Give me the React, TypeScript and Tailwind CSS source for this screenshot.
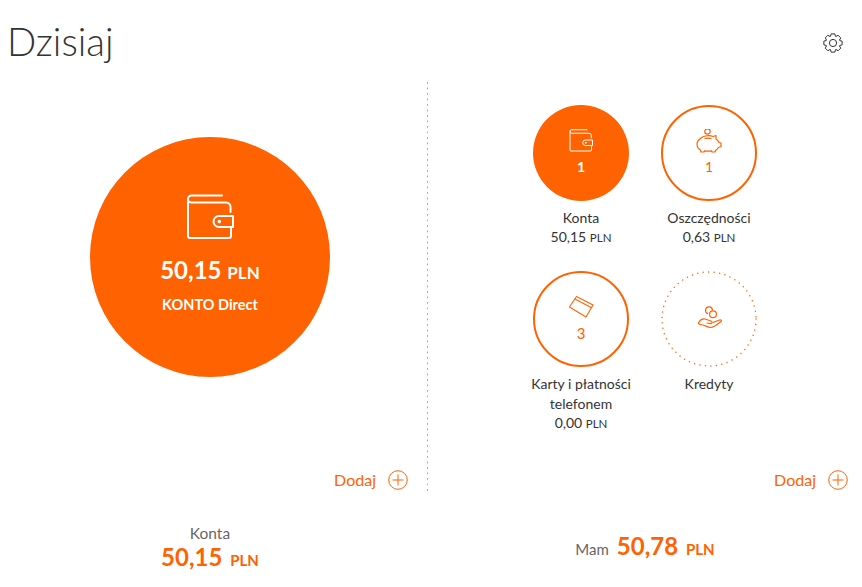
import React from 'react';

const font = "font-['Lato','Noto_Sans',sans-serif]";

// 8 tooth gear outline, looks closer than the lucide one
const gearPath = () => {
  const cx = 10;
  const cy = 10;
  const parts: string[] = [];
  for (let i = 0; i < 8; i++) {
    const a = (i * Math.PI) / 4 - Math.PI / 2;
    const pts: [number, number][] = [
      [7.1, a - 0.36],
      [9.3, a - 0.2],
      [9.3, a + 0.2],
      [7.1, a + 0.36],
    ];
    pts.forEach(([r, t], j) => {
      const x = (cx + r * Math.cos(t)).toFixed(2);
      const y = (cy + r * Math.sin(t)).toFixed(2);
      parts.push(`${i === 0 && j === 0 ? 'M' : 'L'}${x} ${y}`);
    });
  }
  return parts.join(' ') + ' Z';
};

const Wallet = ({ className }: { className?: string }) => (
  <svg viewBox="0 0 48 46" fill="none" stroke="currentColor" strokeWidth="2" strokeLinecap="round" strokeLinejoin="round" className={className}>
    <path d="M36 1.500H5.500A3.500 3.500 0 0 0 2 5v37a2 2 0 0 0 2 2h39a2 2 0 0 0 2-2v-9" />
    <path d="M2 5a3.500 3.500 0 0 0 3.500 3.500H40a4.500 4.500 0 0 1 4.500 4.500v5" />
    <path d="M47 33V22H33a5.500 5.500 0 0 0 0 11h14" />
    <circle cx="33.300" cy="27.600" r="0.800" fill="currentColor" />
  </svg>
);

const Piggy = ({ className }: { className?: string }) => (
  <svg viewBox="0 0 26 24" fill="none" stroke="currentColor" strokeWidth="1.200" strokeLinecap="round" strokeLinejoin="round" className={className}>
    <circle cx="11.500" cy="2.500" r="2.700" />
    <path d="M5 9C8 6.500 14 6 17 7.500L20 6.500V10C21.500 11 22.500 12 23 13.500L25 14V17.500L22.500 18.500C21.500 20 20.500 20.800 19.500 21.500L19 23H16L15.500 21.800C13 22.300 10.500 22.300 8.500 21.800L8 23H5L4.500 21C2 19.500 1 17.500 1 15C1 12 3 10.500 5 9Z" />
    <path d="M9 9.500c2-.5 4-.5 6 0" />
  </svg>
);

const Card = ({ className }: { className?: string }) => (
  <svg viewBox="0 0 26 24" fill="none" stroke="currentColor" strokeWidth="1.100" strokeLinejoin="round" className={className}>
    <path d="M8.500 1.500 25 10 18 22 1.500 12Z" />
    <path d="M7 4 23.500 12.800" />
  </svg>
);

const HandCoins = ({ className }: { className?: string }) => (
  <svg viewBox="0 0 26 26" fill="none" stroke="currentColor" strokeWidth="1.200" strokeLinecap="round" strokeLinejoin="round" className={className}>
    <path d="M11.700 7.600a3.500 3.500 0 1 1 4.800-3.600" />
    <circle cx="17" cy="8.300" r="3.400" />
    <path d="M2.500 17C4 14 6 12.500 9 13L15 15C17 16 16 18 14 17.500L11 17" />
    <path d="M2.500 17C2.500 18.500 4.500 18.500 7 19C10 20 12 21.500 14.500 21.500C17 21.500 22 18 25 15.500C25.800 14.500 25 13.500 23.500 14L17 16.500" />
  </svg>
);

const Plus = () => (
  <svg viewBox="0 0 20 20" fill="none" stroke="currentColor" strokeWidth="1" className="w-5 h-5">
    <circle cx="10" cy="10" r="9.300" />
    <path d="M10 4.500v11M4.500 10h11" />
  </svg>
);

const Dodaj = () => (
  <div className="flex items-center gap-[12px] text-[#ff6200] text-[16px] leading-5">
    <span>Dodaj</span>
    <Plus />
  </div>
);

const Amount = ({ v }: { v: string }) => (
  <span className="text-[#333] text-[14px] leading-[18px]">
    {v} <span className="text-[11.5px]">PLN</span>
  </span>
);

export default function App() {
  return (
    <div className={`${font} w-[862px] h-[587px] bg-white overflow-hidden flex flex-col`}>
      <header className="h-[82px] flex justify-between pl-[7px] pr-[19px]">
        <h1 className="text-[38.5px] leading-[48px] mt-[17px] font-light text-[#333]">Dzisiaj</h1>
        <svg viewBox="0 0 20 20" fill="none" stroke="#333" strokeWidth="1" strokeLinejoin="round" className="w-5 h-5 mt-[33px]">
          <path d={gearPath()} />
          <circle cx="10" cy="10" r="3.600" />
        </svg>
      </header>

      <main className="h-[410px] flex">
        {/* left column */}
        <section className="w-[427px] flex flex-col pl-[90px] pr-[19px] pt-[55px] pb-[2px]">
          <div className="w-[240px] h-[240px] rounded-full bg-[#ff6200] text-white flex flex-col items-center pt-[57px]">
            <Wallet className="w-12 h-[46px]" />
            <div className="mt-[16px] font-bold text-[24px] leading-7">
              50,15 <span className="text-[17px]">PLN</span>
            </div>
            <div className="mt-[8px] text-[14.5px] leading-5 font-bold">KONTO Direct</div>
          </div>
          <div className="mt-auto flex justify-end">
            <Dodaj />
          </div>
        </section>

        <div className="w-px bg-[linear-gradient(#a8a8a8_2px,transparent_2px)] bg-[length:1px_5.5px]" />

        {/* right column */}
        <section className="flex-1 flex flex-col pl-[89px] pr-[14px] pt-[23px] pb-[2px]">
          <div className="grid grid-cols-[128px_128px] auto-rows-[166px] text-center">
            <div className="flex flex-col items-center">
              <div className="w-24 h-24 rounded-full bg-[#ff6200] text-white flex flex-col items-center pt-[24px]">
                <Wallet className="w-6 h-[23px]" />
                <span className="mt-[5px] text-[14px] leading-5 font-bold">1</span>
              </div>
              <div className="mt-[7px] text-[14px] leading-5 text-[#333]">Konta</div>
              <Amount v="50,15" />
            </div>
            <div className="flex flex-col items-center">
              <div className="w-24 h-24 rounded-full border-2 border-[#ff6200] text-[#ff6200] flex flex-col items-center pt-[22px]">
                <Piggy className="w-[26px] h-6" />
                <span className="mt-[4px] text-[14px] leading-5">1</span>
              </div>
              <div className="mt-[7px] text-[14px] leading-5 text-[#333]">Oszczędności</div>
              <Amount v="0,63" />
            </div>
            <div className="flex flex-col items-center">
              <div className="w-24 h-24 rounded-full border-2 border-[#ff6200] text-[#ff6200] flex flex-col items-center pt-[22px]">
                <Card className="w-[26px] h-6" />
                <span className="mt-[4px] text-[15px] leading-5">3</span>
              </div>
              <div className="mt-[7px] text-[14px] leading-5 text-[#333]">
                Karty i płatności
                <br />
                telefonem
              </div>
              <Amount v="0,00" />
            </div>
            <div className="flex flex-col items-center">
              <div className="relative w-24 h-24 text-[#ff6200] flex items-center justify-center">
                <svg viewBox="0 0 96 96" fill="none" stroke="currentColor" strokeWidth="1.500" strokeLinecap="round" strokeDasharray="0 5.520" className="absolute inset-0 w-24 h-24">
                  <circle cx="48" cy="48" r="47" />
                </svg>
                <HandCoins className="w-[26px] h-[26px]" />
              </div>
              <div className="mt-[7px] text-[14px] leading-5 text-[#333]">Kredyty</div>
            </div>
          </div>
          <div className="mt-auto flex justify-end">
            <Dodaj />
          </div>
        </section>
      </main>

      <footer className="flex-1 flex">
        <div className="w-[420px] flex flex-col items-center pt-[31px]">
          <div className="text-[15.5px] leading-5 text-[#666]">Konta</div>
          <div className="font-bold text-[#ff6200] text-[24px] leading-7">
            50,15 <span className="ml-[2px] text-[15px]">PLN</span>
          </div>
        </div>
        <div className="flex-1 flex justify-center items-baseline gap-[8px] pl-[8px] pt-[40px]">
          <span className="text-[15px] text-[#666]">Mam</span>
          <div className="font-bold text-[#ff6200] text-[24px] leading-7">
            50,78 <span className="ml-[2px] text-[15px]">PLN</span>
          </div>
        </div>
      </footer>
    </div>
  );
}
